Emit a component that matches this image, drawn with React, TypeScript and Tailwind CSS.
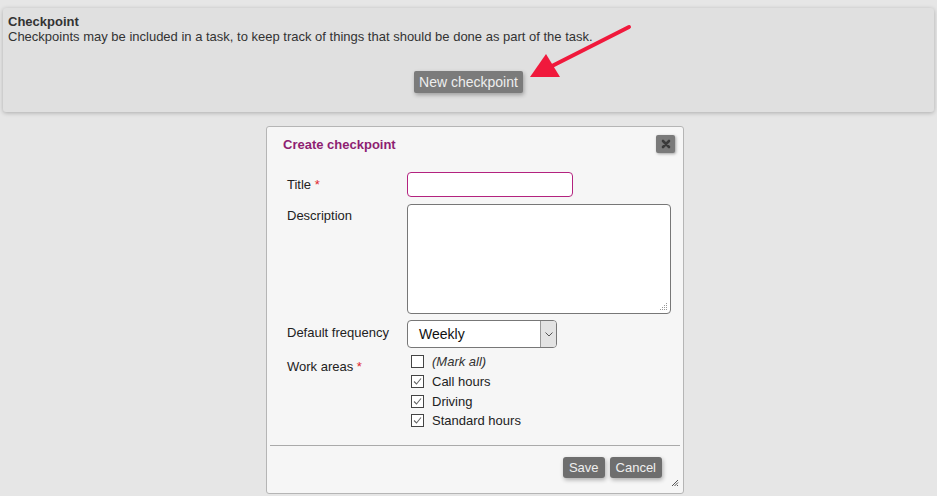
import { useState } from "react";

const font = { fontFamily: '"Liberation Sans", Arial, sans-serif' };

export default function App() {
  return (
    <div className="relative w-[937px] h-[496px] overflow-hidden bg-[#e6e6e6] text-[#333]" style={font}>
      <TopPanel />
      <Dialog />
      <Arrow />
    </div>
  );
}

/* =====================
  TOP PANEL
===================== */
const TopPanel = () => {
  return (
    <section className="mx-[3px] mt-[8px] h-[104px] bg-[#e0e0e0] rounded-[3px] shadow-[0_1px_4px_rgba(0,0,0,0.25)] px-[5px] pt-[6px]">
      <h2 className="text-[13px] font-bold leading-[15px] text-[#333]">Checkpoint</h2>
      <p className="text-[13px] leading-[16px] text-[#333]">
        Checkpoints may be included in a task, to keep track of things that should be done as part of the task.
      </p>
      <div className="flex justify-center mt-[26px]">
        <button className="h-[22px] px-[5px] rounded-[2px] bg-[#7b7b7b] text-[#eee] text-[14px] leading-[22px] shadow-[1px_2px_4px_rgba(0,0,0,0.3)]">
          New checkpoint
        </button>
      </div>
    </section>
  );
};

/* =====================
  ARROW (annotation)
===================== */
const Arrow = () => (
  <svg className="absolute left-0 top-0 pointer-events-none" width="937" height="496">
    <line x1="629" y1="27" x2="552" y2="66" stroke="#f0193c" strokeWidth="4" strokeLinecap="round" />
    <polygon points="530,77 546,54 560,77" fill="#f0193c" />
  </svg>
);

/* =====================
  DIALOG
===================== */
const Dialog = () => {
  const [areas, setAreas] = useState({ call: true, driving: true, standard: true });

  return (
    <div className="relative ml-[266px] mt-[14px] w-[418px] h-[368px] bg-[#f6f6f6] border border-[#b5b5b5] rounded-[3px] text-[13px] leading-[15px] text-[#222]">
      {/* Header */}
      <div className="flex items-center justify-between h-[18px] mt-[8px] pl-[16px] pr-[8px]">
        <h3 className="text-[13px] font-bold text-[#8e1e72]">Create checkpoint</h3>
        <button className="w-[19px] h-[18px] rounded-[2px] bg-[#7a7a7a] flex items-center justify-center shadow-[1px_1px_3px_rgba(0,0,0,0.35)]">
          <svg width="10" height="10" viewBox="0 0 10 10">
            <path d="M2 2 L8 8 M8 2 L2 8" stroke="#3a3a3a" strokeWidth="2.6" strokeLinecap="round" />
          </svg>
        </button>
      </div>

      {/* Form */}
      <div className="pl-[20px] pt-[19px] flex flex-col">
        <div className="flex">
          <label className="w-[120px] pt-[5px]">
            Title <span className="text-[#e0262e]">*</span>
          </label>
          <input className="w-[166px] h-[25px] bg-white border border-[#b3237f] rounded-[4px] outline-none" />
        </div>

        <div className="flex mt-[7px]">
          <label className="w-[120px] pt-[4px]">Description</label>
          <div className="relative w-[264px] h-[110px] bg-white border border-[#777] rounded-[4px]">
            <svg className="absolute right-[2px] bottom-[2px]" width="8" height="8" viewBox="0 0 8 8">
              <rect x="6" y="0" width="1" height="1" fill="#999" />
              <rect x="4" y="2" width="1" height="1" fill="#999" />
              <rect x="6" y="2" width="1" height="1" fill="#999" />
              <rect x="2" y="4" width="1" height="1" fill="#999" />
              <rect x="4" y="4" width="1" height="1" fill="#999" />
              <rect x="6" y="4" width="1" height="1" fill="#999" />
              <rect x="0" y="6" width="1" height="1" fill="#999" />
              <rect x="2" y="6" width="1" height="1" fill="#999" />
              <rect x="4" y="6" width="1" height="1" fill="#999" />
              <rect x="6" y="6" width="1" height="1" fill="#999" />
            </svg>
          </div>
        </div>

        <div className="flex mt-[6px]">
          <label className="w-[120px] pt-[5px]">Default frequency</label>
          <div className="flex w-[150px] h-[28px] bg-white border border-[#777] rounded-[4px] overflow-hidden">
            <span className="flex-1 pl-[11px] leading-[26px] text-[14px] text-[#111]">Weekly</span>
            <span className="w-[16px] border-l border-[#999] bg-[#e3e3e3] flex items-center justify-center">
              <svg width="8" height="5" viewBox="0 0 8 5">
                <path d="M0.5 0.5 L4 4 L7.5 0.5" stroke="#555" fill="none" strokeWidth="1" />
              </svg>
            </span>
          </div>
        </div>

        <div className="flex mt-[4px]">
          <label className="w-[120px] pt-[7px]">
            Work areas <span className="text-[#e0262e]">*</span>
          </label>
          <div className="flex flex-col pl-[4px]">
            <Check label="(Mark all)" italic checked={false} onChange={() => {}} />
            <Check label="Call hours" checked={areas.call} onChange={() => setAreas({ ...areas, call: !areas.call })} />
            <Check label="Driving" checked={areas.driving} onChange={() => setAreas({ ...areas, driving: !areas.driving })} />
            <Check label="Standard hours" checked={areas.standard} onChange={() => setAreas({ ...areas, standard: !areas.standard })} />
          </div>
        </div>
      </div>

      {/* Footer */}
      <div className="mx-[3px] mt-[14px] border-t border-[#aaa]" />
      <div className="flex justify-end gap-[5px] pr-[21px] pt-[11px]">
        <DlgButton>Save</DlgButton>
        <DlgButton>Cancel</DlgButton>
      </div>

      <svg className="absolute right-[4px] bottom-[6px]" width="8" height="8" viewBox="0 0 8 8">
        <path d="M7 1 L1 7 M7 3.5 L3.5 7 M7 6 L6 7" stroke="#555" strokeWidth="1" />
      </svg>
    </div>
  );
};

const DlgButton = ({ children }: { children: React.ReactNode }) => (
  <button className="h-[21px] px-[6px] rounded-[3px] bg-[#6e6e6e] text-[#eee] text-[13px] leading-[21px] shadow-[1px_2px_4px_rgba(0,0,0,0.3)]">
    {children}
  </button>
);

const Check = ({
  label,
  checked,
  italic,
  onChange,
}: {
  label: string;
  checked: boolean;
  italic?: boolean;
  onChange: () => void;
}) => (
  <label className="flex items-center h-[19.7px] gap-[8px] cursor-pointer" onClick={onChange}>
    <span className="w-[13px] h-[13px] border border-[#444] bg-white flex items-center justify-center">
      {checked && (
        <svg width="11" height="11" viewBox="0 0 11 11">
          <path d="M2 5.5 L4.5 8 L9 2.5" stroke="#666" strokeWidth="1.1" fill="none" />
        </svg>
      )}
    </span>
    <span className={italic ? "italic text-[#333]" : "text-[#222]"}>{label}</span>
  </label>
);
